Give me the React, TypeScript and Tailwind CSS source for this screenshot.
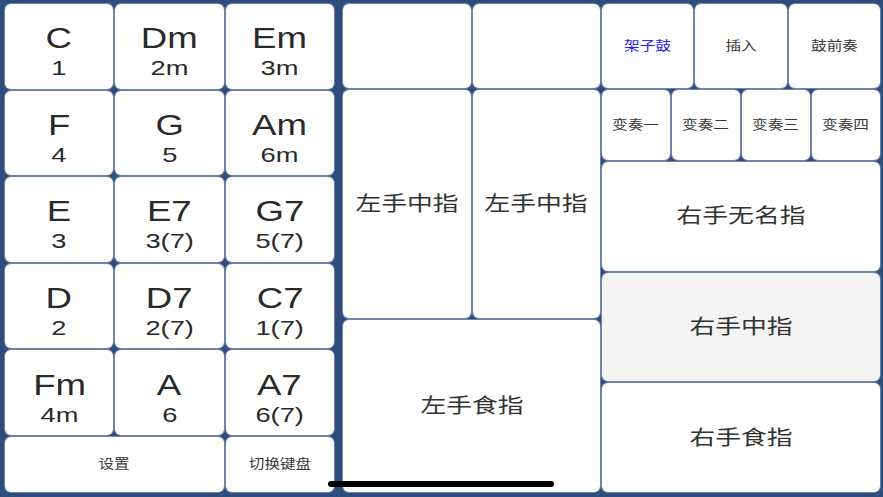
import React from "react";

const cjk = "font-['Liberation_Sans','Noto_Sans_CJK_SC',sans-serif]";

function Cell({
  children,
  className = "",
}: {
  children?: React.ReactNode;
  className?: string;
}) {
  return (
    <div
      className={`bg-white rounded-[6px] flex items-center justify-center overflow-hidden shadow-[0_0_0_1px_#6f84a8] ${className}`}
    >
      {children}
    </div>
  );
}

function Chord({ name, sub }: { name: string; sub: string }) {
  return (
    <Cell>
      <div className="flex flex-col items-center pt-[10px] text-[#2a2a2a] font-['Liberation_Sans',sans-serif]">
        <span className="block text-[30px] leading-[30px] scale-x-[1.22]">{name}</span>
        <span className="block mt-[4px] text-[21px] leading-[22px] scale-x-[1.3]">{sub}</span>
      </div>
    </Cell>
  );
}

function Small({ text, blue = false }: { text: string; blue?: boolean }) {
  return (
    <span
      className={`block text-[13px] leading-[16px] scale-x-[1.2] ${cjk} ${
        blue ? "text-[#2424f2]" : "text-[#383838]"
      }`}
    >
      {text}
    </span>
  );
}

function Big({ text }: { text: string }) {
  return (
    <span className={`block text-[20px] leading-[24px] scale-x-[1.29] text-[#333333] ${cjk}`}>
      {text}
    </span>
  );
}

const chords: [string, string][] = [
  ["C", "1"],
  ["Dm", "2m"],
  ["Em", "3m"],
  ["F", "4"],
  ["G", "5"],
  ["Am", "6m"],
  ["E", "3"],
  ["E7", "3(7)"],
  ["G7", "5(7)"],
  ["D", "2"],
  ["D7", "2(7)"],
  ["C7", "1(7)"],
  ["Fm", "4m"],
  ["A", "6"],
  ["A7", "6(7)"],
];

export default function App() {
  return (
    <div className="relative w-[883px] h-[497px] bg-[#2e4c7c] flex pt-[4px] pl-[5px] pr-[3px] pb-[5px] overflow-hidden">
      {/* Left chord panel */}
      <div className="w-[329px] h-full grid grid-cols-3 grid-rows-[repeat(5,minmax(0,1fr))_55px] gap-[2px]">
        {chords.map(([n, s]) => (
          <Chord key={n} name={n} sub={s} />
        ))}
        <Cell className="col-span-2">
          <Small text="设置" />
        </Cell>
        <Cell>
          <Small text="切换键盘" />
        </Cell>
      </div>

      {/* Middle panel */}
      <div className="ml-[9px] w-[257px] h-full flex flex-col gap-[2px]">
        <div className="h-[84px] grid grid-cols-2 gap-[2px]">
          <Cell />
          <Cell />
        </div>
        <div className="h-[228px] grid grid-cols-2 gap-[2px]">
          <Cell>
            <Big text="左手中指" />
          </Cell>
          <Cell>
            <Big text="左手中指" />
          </Cell>
        </div>
        <Cell className="flex-1">
          <Big text="左手食指" />
        </Cell>
      </div>

      {/* Right panel */}
      <div className="ml-[2px] flex-1 h-full flex flex-col gap-[2px]">
        <div className="h-[84px] grid grid-cols-3 gap-[2px]">
          <Cell>
            <Small text="架子鼓" blue />
          </Cell>
          <Cell>
            <Small text="插入" />
          </Cell>
          <Cell>
            <Small text="鼓前奏" />
          </Cell>
        </div>
        <div className="h-[70px] grid grid-cols-4 gap-[2px]">
          <Cell>
            <Small text="变奏一" />
          </Cell>
          <Cell>
            <Small text="变奏二" />
          </Cell>
          <Cell>
            <Small text="变奏三" />
          </Cell>
          <Cell>
            <Small text="变奏四" />
          </Cell>
        </div>
        <Cell className="flex-1">
          <Big text="右手无名指" />
        </Cell>
        <Cell className="flex-1 !bg-[#f4f4f4]">
          <Big text="右手中指" />
        </Cell>
        <Cell className="flex-1">
          <Big text="右手食指" />
        </Cell>
      </div>

      {/* Home indicator */}
      <div className="absolute left-[328px] top-[481px] w-[226px] h-[6px] rounded-full bg-black" />
    </div>
  );
}
